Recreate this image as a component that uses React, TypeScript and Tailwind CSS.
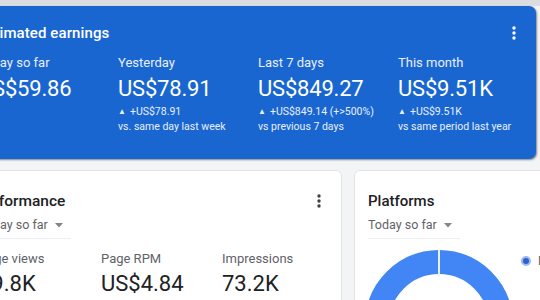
import React from "react";

function Dots({ className }: { className?: string }) {
  return (
    <svg width="4" height="14" viewBox="0 0 4 14" className={className}>
      <circle cx="2" cy="2" r="1.7" fill="currentColor" />
      <circle cx="2" cy="7" r="1.7" fill="currentColor" />
      <circle cx="2" cy="12" r="1.7" fill="currentColor" />
    </svg>
  );
}

function Caret() {
  return (
    <svg width="8" height="5" viewBox="0 0 8 5" className="ml-[7px]">
      <path d="M0 0 L8 0 L4 4.5 Z" fill="#80868b" />
    </svg>
  );
}

const earnings = [
  { label: "Today so far", value: "US$59.86", a: "", b: "" },
  { label: "Yesterday", value: "US$78.91", a: "+US$78.91", b: "vs. same day last week" },
  { label: "Last 7 days", value: "US$849.27", a: "+US$849.14 (+>500%)", b: "vs previous 7 days" },
  { label: "This month", value: "US$9.51K", a: "+US$9.51K", b: "vs same period last year" },
];

const perf = [
  { label: "Page views", value: "19.8K", w: "w-[122px]" },
  { label: "Page RPM", value: "US$4.84", w: "w-[121px]" },
  { label: "Impressions", value: "73.2K", w: "w-[121px]" },
];

export default function App() {
  return (
    <div className="w-[540px] h-[300px] overflow-hidden bg-[#f3f4f5] font-['Roboto',sans-serif]">
      <div className="h-[6px] bg-[#dcdde0]" />
      <div className="ml-[-38px] mr-[4px] h-[153px] rounded-[7px] bg-[#1a66d1] shadow-[1px_1px_2px_rgba(0,0,0,0.45)] pl-[16px] pt-[17px] text-white">
        <div className="flex items-center justify-between pr-[20px]">
          <div className="text-[15px] leading-[20px] font-medium tracking-[0.1px]">Estimated earnings</div>
          <Dots className="text-white" />
        </div>
        <div className="flex mt-[12px]">
          {earnings.map((e) => (
            <div key={e.label} className="w-[140px] shrink-0">
              <div className="text-[13px] leading-[16px] text-[#e8efff]">{e.label}</div>
              <div className="text-[22px] leading-[28px] mt-[4px] tracking-[-0.2px]">{e.value}</div>
              {e.a && (
                <>
                  <div className="text-[10.5px] leading-[14px] mt-[2px] text-[#e8efff] flex items-center">
                    <span className="text-[8px] mr-[4px]">▲</span>
                    {e.a}
                  </div>
                  <div className="text-[10.5px] leading-[15px] text-[#e8efff]">{e.b}</div>
                </>
              )}
            </div>
          ))}
        </div>
      </div>
      <div className="flex w-[600px] ml-[-38px] mt-[11px] gap-[12px]">
        <div className="w-[380px] h-[140px] shrink-0 bg-white rounded-[6px] border border-[#e3e4e6] pl-[16px] pt-[20px]">
          <div className="flex items-center justify-between pr-[20px]">
            <div className="ml-[-4px] text-[15.5px] leading-[20px] text-[#202124] font-medium">Performance</div>
            <Dots className="text-[#3c4043]" />
          </div>
          <div className="mt-[6px] inline-flex items-center text-[12.5px] leading-[16px] text-[#5f6368] border-b border-[#eceef0] pb-[5px] pr-[8px]">
            Today so far
            <Caret />
          </div>
          <div className="flex mt-[12px]">
            {perf.map((p) => (
              <div key={p.label} className={p.w + " shrink-0"}>
                <div className="text-[13px] leading-[16px] text-[#5f6368]">{p.label}</div>
                <div className="text-[22px] leading-[28px] mt-[3px] text-[#202124]">{p.value}</div>
              </div>
            ))}
          </div>
        </div>
        <div className="w-[200px] h-[140px] shrink-0 bg-white rounded-[6px] border border-[#e3e4e6] pl-[13px] pt-[20px]">
          <div className="text-[15px] leading-[20px] text-[#202124] font-medium">Platforms</div>
          <div className="mt-[6px] inline-flex items-center text-[12.5px] leading-[16px] text-[#5f6368] border-b border-[#eceef0] pb-[5px] pr-[8px]">
            Today so far
            <Caret />
          </div>
          <div className="flex items-start w-[220px] mt-[11px] ml-[-3px]">
            <svg width="148" height="148" viewBox="0 0 148 148" className="block shrink-0">
              <circle cx="74" cy="74" r="62" fill="none" stroke="#4285f4" strokeWidth="24" />
              <line x1="74" y1="0" x2="74" y2="26" stroke="#e8f0fe" strokeWidth="2" />
            </svg>
            <div className="shrink-0 ml-[8px] mt-[5px] flex items-center">
              <div className="w-[10px] h-[10px] shrink-0 rounded-full bg-[#2f62cc] border-2 border-[#9db9f0]" />
              <div className="ml-[7px] text-[12px] leading-[12px] text-[#5f6368]">Desktop</div>
            </div>
          </div>
        </div>
      </div>
    </div>
  );
}
